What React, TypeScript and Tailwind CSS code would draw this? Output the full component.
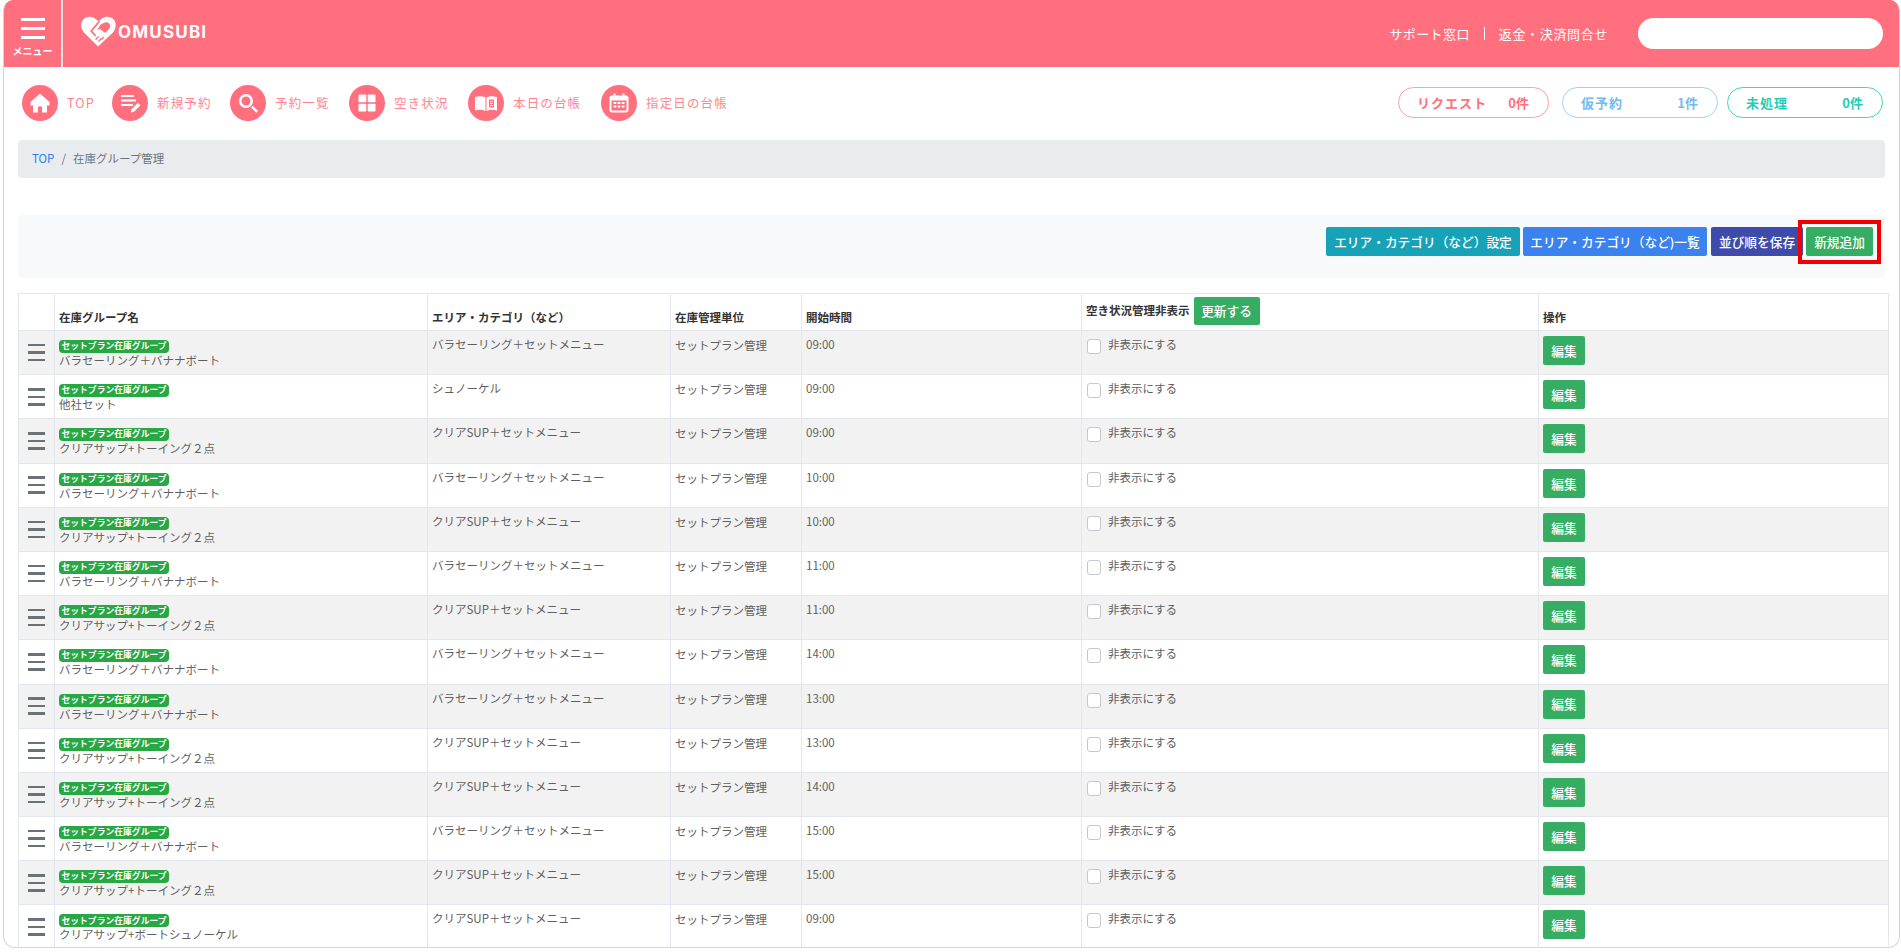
const FONT = "font-['Noto_Sans_CJK_JP','Noto_Sans',sans-serif]";

const BARA = ["バラセーリング＋バナナボート", "バラセーリング＋セットメニュー"];
const CLEAR = ["クリアサップ+トーイング２点", "クリアSUP＋セットメニュー"];
const rows: string[][] = [
  [...BARA, "09:00"],
  ["他社セット", "シュノーケル", "09:00"],
  [...CLEAR, "09:00"],
  [...BARA, "10:00"],
  [...CLEAR, "10:00"],
  [...BARA, "11:00"],
  [...CLEAR, "11:00"],
  [...BARA, "14:00"],
  [...BARA, "13:00"],
  [...CLEAR, "13:00"],
  [...CLEAR, "14:00"],
  [...BARA, "15:00"],
  [...CLEAR, "15:00"],
  ["クリアサップ+ボートシュノーケル", "クリアSUP＋セットメニュー", "09:00"],
];

function Circle({ children }: { children: React.ReactNode }) {
  return (
    <span className="flex h-9 w-9 shrink-0 items-center justify-center rounded-full bg-[#ff6f7d]">
      <svg viewBox="0 0 24 24" className="h-6 w-6" fill="white">
        {children}
      </svg>
    </span>
  );
}

const navItems: { label: string; w: string; icon: React.ReactNode }[] = [
  {
    label: "TOP",
    w: "w-[90px]",
    icon: <path d="M12 2.500 2.500 11V14.500H5V21.500H10V15.500H14V21.500H19V14.500H21.500V11Z" />,
  },
  {
    label: "新規予約",
    w: "w-[118px]",
    icon: (
      <>
        <rect x="3" y="4" width="13" height="2" rx=".5" />
        <rect x="3" y="8.500" width="15" height="2" rx=".5" />
        <rect x="3" y="13" width="12" height="2" rx=".5" />
        <path d="M20 11.800 22.500 14.300 16 20.800 12.800 21.500 13.500 18.300Z" />
      </>
    ),
  },
  {
    label: "予約一覧",
    w: "w-[119px]",
    icon: (
      <>
        <path
          fillRule="evenodd"
          d="M10 3a7 7 0 1 0 0 14 7 7 0 0 0 0-14Zm0 2.500a4.500 4.500 0 1 1 0 9 4.500 4.500 0 0 1 0-9Z"
        />
        <path d="M15 16.500 16.700 14.800 22 20.100 20.300 21.800Z" />
      </>
    ),
  },
  {
    label: "空き状況",
    w: "w-[119px]",
    icon: (
      <>
        <rect x="3.500" y="3.500" width="7.800" height="7.800" rx=".8" />
        <rect x="12.700" y="3.500" width="7.800" height="7.800" rx=".8" />
        <rect x="3.500" y="12.700" width="7.800" height="7.800" rx=".8" />
        <rect x="12.700" y="12.700" width="7.800" height="7.800" rx=".8" />
      </>
    ),
  },
  {
    label: "本日の台帳",
    w: "w-[133px]",
    icon: (
      <path
        fillRule="evenodd"
        d="M1 6C4.500 4.800 8.800 5 11.500 6.500V20C8.500 18.500 4.500 18.300 1 19.500ZM12.500 6.500C15.200 5 19.500 4.800 23 6V19.500C19.500 18.300 15.500 18.500 12.500 20ZM15 8.500V16.500H20V8.500ZM16 10H19V11H16ZM16 12H19V13H16ZM16 14H19V15H16Z"
      />
    ),
  },
  {
    label: "指定日の台帳",
    w: "w-[150px]",
    icon: (
      <path
        fillRule="evenodd"
        d="M6.500 2.500H8.500V4.500H15.500V2.500H17.500V4.500H19C20.400 4.500 21.500 5.600 21.500 7V19C21.500 20.400 20.400 21.500 19 21.500H5C3.600 21.500 2.500 20.400 2.500 19V7C2.500 5.600 3.600 4.500 5 4.500H6.500ZM4.500 9.500V19C4.500 19.300 4.700 19.500 5 19.500H19C19.300 19.500 19.500 19.300 19.500 19V9.500ZM6.500 11H9.300V13H6.500ZM10.600 11H13.400V13H10.600ZM14.700 11H17.500V13H14.700ZM6.500 14.500H9.300V16.500H6.500ZM10.600 14.500H13.400V16.500H10.600ZM14.700 14.500H17.500V16.500H14.700Z"
      />
    ),
  },
];

function Pill({ label, count, cls, w }: { label: string; count: string; cls: string; w: string }) {
  return (
    <div className={`flex h-[31px] ${w} shrink-0 items-center justify-between rounded-full border-[1.5px] bg-white pl-[18px] pr-[19px] text-[13px] font-bold ${cls}`}>
      <span className="tracking-[0.08em]">{label}</span>
      <span>{count}</span>
    </div>
  );
}

function Logo() {
  return (
    <svg viewBox="0 0 36 32" className="h-[31px] w-[35px]">
      <path
        fill="white"
        d="M17.500 31.500 3 17C-.800 12.800 -.800 6.500 2.800 3 6.500 -.200 11.500 0 15 3L18 5.500 21.500 2.500C25 0 30 .200 33.200 3.200 36.800 6.800 36.500 12.800 33 17Z"
      />
      <path
        fill="#ff6f7d"
        d="M20.500 8.500 25.500 6.500C29 6 31 9.500 29.500 12.500L25 17.500 19.500 13.500 16.500 14.500Z"
      />
      <path fill="none" stroke="#ff6f7d" strokeWidth="1.800" strokeLinecap="round" d="M18.500 6 10.500 15.500 14.500 20" />
      <path stroke="#ff6f7d" strokeWidth="1.300" d="M15 24.500 18 21M18 26.500 21 23M21 24.500 23.500 21.500" />
    </svg>
  );
}

const th = "border border-[#e4e8ee] px-[4px] pb-[4px] align-bottom text-left text-[11.500px] font-bold text-[#333]";
const td = "border border-[#e4e8ee] px-[4px] pt-[5px] align-top text-[11.500px] text-[#5f5f5f]";

export default function App() {
  return (
    <div className={`h-[952px] w-[1901px] overflow-hidden bg-white ${FONT}`}>
      <div className="relative ml-[3px] mr-[1px] h-[948px] overflow-hidden rounded-b-xl rounded-t-[10px] border border-t-0 border-[#d5d5d5]">
        {/* header */}
        <header className="flex h-[67px] items-stretch bg-[#ff6f7d] text-white">
          <div className="flex w-[59px] flex-col items-center border-r-2 border-[#ffe0e3] pt-[18px]">
            <div className="flex w-[24px] flex-col gap-[6px]">
              <span className="h-[3px] bg-white" />
              <span className="h-[3px] bg-white" />
              <span className="h-[3px] bg-white" />
            </div>
            <span className="mt-[5px] text-[10px] font-bold leading-[14px]">メニュー</span>
          </div>
          <div className="ml-[18px] flex items-center gap-[2px] pb-[4px]">
            <Logo />
            <span className="pt-[2px] font-['Inter',sans-serif] text-[17px] font-bold tracking-[0.07em]">OMUSUBI</span>
          </div>
          <div className="ml-auto flex items-center pr-[16px]">
            <span className="text-[13px] tracking-[0.03em]">サポート窓口</span>
            <span className="mx-[14px] h-[13px] w-px bg-white" />
            <span className="text-[13px] tracking-[0.05em]">返金・決済問合せ</span>
            <div className="ml-[30px] h-[31px] w-[245px] rounded-full bg-white" />
          </div>
        </header>

        <div className="px-[14px]">
          {/* nav */}
          <div className="flex h-[73px] items-center">
            <nav className="flex items-center pb-[1px] pl-[4px]">
              {navItems.map((n) => (
                <div key={n.label} className={`flex items-center gap-[9px] ${n.w}`}>
                  <Circle>{n.icon}</Circle>
                  <span className="text-[12.500px] tracking-[0.09em] text-[#ff8591]">{n.label}</span>
                </div>
              ))}
            </nav>
            <div className="ml-auto mr-[2px] flex pb-[2px]">
              <Pill label="リクエスト" count="0件" cls="border-[#ff9fa8] text-[#ff6f7d]" w="w-[151px]" />
              <div className="w-[13px]" />
              <Pill label="仮予約" count="1件" cls="border-[#9dd3fb] text-[#73b9f2]" w="w-[156px]" />
              <div className="w-[9px]" />
              <Pill label="未処理" count="0件" cls="border-[#3ed6c4] text-[#1fcdb8]" w="w-[156px]" />
            </div>
          </div>

          {/* breadcrumb */}
          <div className="flex h-[38px] items-center rounded-[4px] bg-[#e9ecef] pl-[14px] text-[11.500px]">
            <span className="text-[#2f80ed]">TOP</span>
            <span className="mx-[7px] text-[#6c757d]">/</span>
            <span className="text-[#6c757d]">在庫グループ管理</span>
          </div>

          {/* toolbar */}
          <div className="mt-[37px] flex h-[63px] items-start justify-end gap-[3px] rounded-[4px] bg-[#f8f9fa] pr-[12px] pt-[12px]">
            <button className="h-[29px] w-[194px] rounded-[2px] bg-[#17a2b8] text-[12.700px] font-medium text-white">
              エリア・カテゴリ（など）設定
            </button>
            <button className="h-[29px] w-[184px] rounded-[2px] bg-[#3b82ee] text-[12.700px] font-medium text-white">
              エリア・カテゴリ（など)一覧
            </button>
            <button className="ml-[1px] h-[29px] w-[92px] rounded-[2px] bg-[#3f4bab] pl-[8px] text-left text-[12.700px] font-medium text-white">
              並び順を保存
            </button>
            <div className="relative">
              <button className="h-[29px] w-[67px] rounded-[2px] bg-[#35ae63] text-[12.700px] font-medium text-white">
                新規追加
              </button>
              <span className="absolute -inset-x-[8px] -bottom-[8px] -top-[7px] border-4 border-[#f00000]" />
            </div>
          </div>

          {/* table */}
          <table className="mt-[15px] w-[1870px] table-fixed border-collapse">
            <colgroup>
              <col className="w-[36px]" />
              <col className="w-[373px]" />
              <col className="w-[243px]" />
              <col className="w-[131px]" />
              <col className="w-[280px]" />
              <col className="w-[457px]" />
              <col className="w-[350px]" />
            </colgroup>
            <thead>
              <tr className="h-[37px]">
                <th className={th} />
                <th className={th}>在庫グループ名</th>
                <th className={th}>エリア・カテゴリ（など）</th>
                <th className={th}>在庫管理単位</th>
                <th className={th}>開始時間</th>
                <th className={th}>
                  <span className="inline-flex items-center gap-[4px] pb-[1px]">
                    空き状況管理非表示
                    <button className="h-[28px] w-[66px] rounded-[2px] bg-[#35ae63] text-[12.700px] font-medium text-white">
                      更新する
                    </button>
                  </span>
                </th>
                <th className={th}>操作</th>
              </tr>
            </thead>
            <tbody>
              {rows.map((r, i) => (
                <tr key={i} className={`h-[44.2px] ${i % 2 === 0 ? "bg-[#f2f2f2]" : "bg-white"}`}>
                  <td className="border border-[#e4e8ee] px-[6px] align-middle">
                    <div className="flex justify-center">
                      <div className="flex w-[17px] flex-col gap-[5px]">
                        <span className="h-[2.500px] bg-[#6b7178]" />
                        <span className="h-[2.500px] bg-[#6b7178]" />
                        <span className="h-[2.500px] bg-[#6b7178]" />
                      </div>
                    </div>
                  </td>
                  <td className="border border-[#e4e8ee] px-[4px] pt-[9px] align-top text-[11.500px] text-[#5f5f5f]">
                    <span className="flex h-[13px] w-[110px] items-center justify-center rounded-[4px] bg-[#28a745] text-[8.800px] font-bold leading-none text-white">
                      セットプラン在庫グループ
                    </span>
                    <span className="block leading-[15px]">{r[0]}</span>
                  </td>
                  <td className={td}>{r[1]}</td>
                  <td className="border border-[#e4e8ee] px-[4px] pt-[6px] align-top text-[11.500px] text-[#5f5f5f]">セットプラン管理</td>
                  <td className={td}>{r[2]}</td>
                  <td className={td}>
                    <span className="ml-[1px] flex items-start gap-[7px]">
                      <span className="mt-[3px] h-[15px] w-[14px] rounded-[3px] border border-[#c4c8ce] bg-white" />
                      <span>非表示にする</span>
                    </span>
                  </td>
                  <td className={td}>
                    <button className="h-[29px] w-[42px] rounded-[2px] bg-[#35ae63] text-[12.700px] font-medium text-white">
                      編集
                    </button>
                  </td>
                </tr>
              ))}
            </tbody>
          </table>
        </div>
      </div>
    </div>
  );
}
